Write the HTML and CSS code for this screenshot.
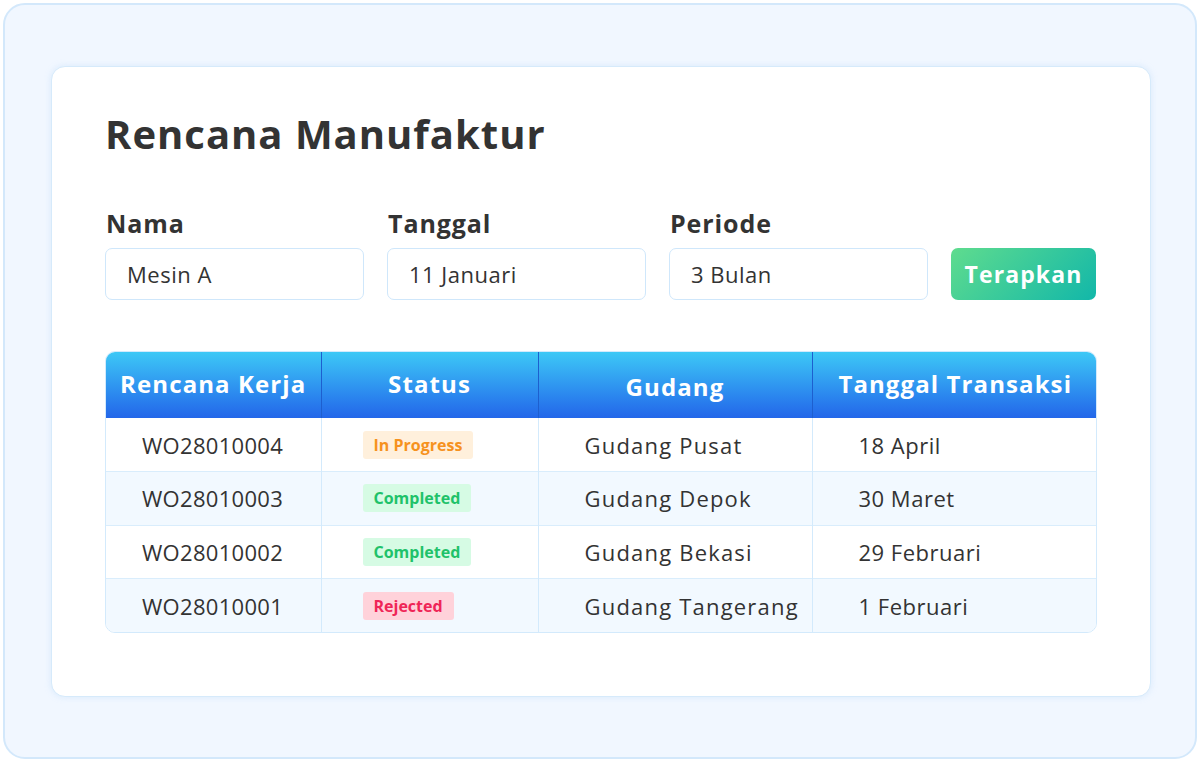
FILE: index.html
```html
<!DOCTYPE html>
<html lang="id">
<head>
<meta charset="utf-8">
<title>Rencana Manufaktur</title>
<link rel="stylesheet" href="styles.css">
</head>
<body>
<div class="frame">
  <div class="card">
    <h1 class="title">Rencana Manufaktur</h1>
    <div class="filters">
      <div class="field">
        <label class="label">Nama</label>
        <div class="input">Mesin A</div>
      </div>
      <div class="field">
        <label class="label">Tanggal</label>
        <div class="input">11 Januari</div>
      </div>
      <div class="field">
        <label class="label">Periode</label>
        <div class="input">3 Bulan</div>
      </div>
      <button class="apply">Terapkan</button>
    </div>
    <div class="table-wrap">
      <table class="table">
        <colgroup>
          <col class="c1"><col class="c2"><col class="c3"><col class="c4">
        </colgroup>
        <thead>
          <tr>
            <th>Rencana Kerja</th>
            <th>Status</th>
            <th class="th-low">Gudang</th>
            <th>Tanggal Transaksi</th>
          </tr>
        </thead>
        <tbody>
          <tr>
            <td class="code">WO28010004</td>
            <td class="st"><span class="badge progress">In Progress</span></td>
            <td class="wh">Gudang Pusat</td>
            <td class="dt">18 April</td>
          </tr>
          <tr class="alt">
            <td class="code">WO28010003</td>
            <td class="st"><span class="badge done">Completed</span></td>
            <td class="wh">Gudang Depok</td>
            <td class="dt">30 Maret</td>
          </tr>
          <tr>
            <td class="code">WO28010002</td>
            <td class="st"><span class="badge done">Completed</span></td>
            <td class="wh">Gudang Bekasi</td>
            <td class="dt">29 Februari</td>
          </tr>
          <tr class="alt">
            <td class="code">WO28010001</td>
            <td class="st"><span class="badge rejected">Rejected</span></td>
            <td class="wh">Gudang Tangerang</td>
            <td class="dt">1 Februari</td>
          </tr>
        </tbody>
      </table>
    </div>
  </div>
</div>
</body>
</html>
```
FILE: styles.css
```css
* { box-sizing: border-box; }
html, body { margin: 0; padding: 0; background: #ffffff; }
body {
  font-family: "Open Sans", "Noto Sans", sans-serif;
  color: #333333;
  width: 1200px;
  height: 762px;
  padding: 3px;
}
.frame {
  width: 1194px;
  height: 756px;
  border: 2px solid #d3e8fb;
  border-radius: 22px;
  background: #f1f7ff;
  padding: 61px 44px 0 46px;
}
.card {
  width: 1100px;
  height: 631px;
  background: #ffffff;
  border: 1px solid #d6eafb;
  border-radius: 14px;
  box-shadow: 0 0 6px rgba(170, 210, 245, 0.35);
  padding: 40px 53px 0 53px;
}
.title {
  margin: 0;
  font-size: 40px;
  font-weight: 700;
  line-height: 54px;
  color: #333333;
  letter-spacing: 1px;
}
.filters {
  margin-top: 47px;
  display: flex;
  align-items: flex-end;
  gap: 23px;
}
.field {
  display: flex;
  flex-direction: column;
  gap: 10px;
}
.label {
  font-size: 25px;
  font-weight: 700;
  line-height: 30px;
  color: #333333;
  padding-left: 1px;
  letter-spacing: 0.9px;
}
.input {
  width: 259px;
  height: 52px;
  border: 1px solid #cfe7fb;
  border-radius: 7px;
  padding-left: 21px;
  font-size: 22px;
  line-height: 50px;
  color: #333333;
  letter-spacing: 0.5px;
}
.apply {
  width: 145px;
  height: 52px;
  border: none;
  border-radius: 7px;
  background: linear-gradient(135deg, #5fdc8e 0%, #12b7a9 100%);
  color: #ffffff;
  font-family: inherit;
  font-size: 23px;
  font-weight: 700;
  letter-spacing: 1.1px;
  padding: 0;
}
.table-wrap {
  margin-top: 51px;
  width: 992px;
  border: 1px solid #d3eafc;
  border-radius: 10px;
  overflow: hidden;
}
.table {
  width: 100%;
  border-collapse: collapse;
  table-layout: fixed;
}
.c1 { width: 215px; }
.c2 { width: 217px; }
.c3 { width: 274px; }
.c4 { width: 286px; }
thead tr {
  background: linear-gradient(180deg, #3dc8f6 0%, #2a83ee 70%, #2366e9 100%);
}
th {
  height: 66px;
  color: #ffffff;
  font-size: 24px;
  font-weight: 700;
  letter-spacing: 1.1px;
  text-align: center;
  border-left: 1px solid #1d5fcf;
  padding: 0 0 4px 0;
  white-space: nowrap;
}
th:first-child { border-left: none; }
th.th-low { padding: 2px 0 0 0; }
td {
  height: 53.5px;
  font-size: 22px;
  color: #333333;
  border-left: 1px solid #d3eafc;
  border-top: 1px solid #d9edfc;
  white-space: nowrap;
  padding: 0;
}
td:first-child { border-left: none; }
tbody tr:first-child td { border-top: none; }
tr.alt td { background: #f2f9ff; }
.code { padding-left: 36px; letter-spacing: 0.3px; }
.st { padding-left: 41px; line-height: 28px; }
.wh { padding-left: 46px; letter-spacing: 1.2px; }
.dt { padding-left: 46px; letter-spacing: 0.5px; }
.badge {
  display: inline-block;
  font-size: 16px;
  font-weight: 700;
  line-height: 28px;
  height: 28px;
  padding: 0 11px;
  border-radius: 3px;
  letter-spacing: 0;
  vertical-align: top;
}
.progress { background: #fff0dc; color: #f6921e; }
.done { background: #d6fbe4; color: #1fc26a; }
.rejected { background: #ffd2da; color: #ef2557; }
```
